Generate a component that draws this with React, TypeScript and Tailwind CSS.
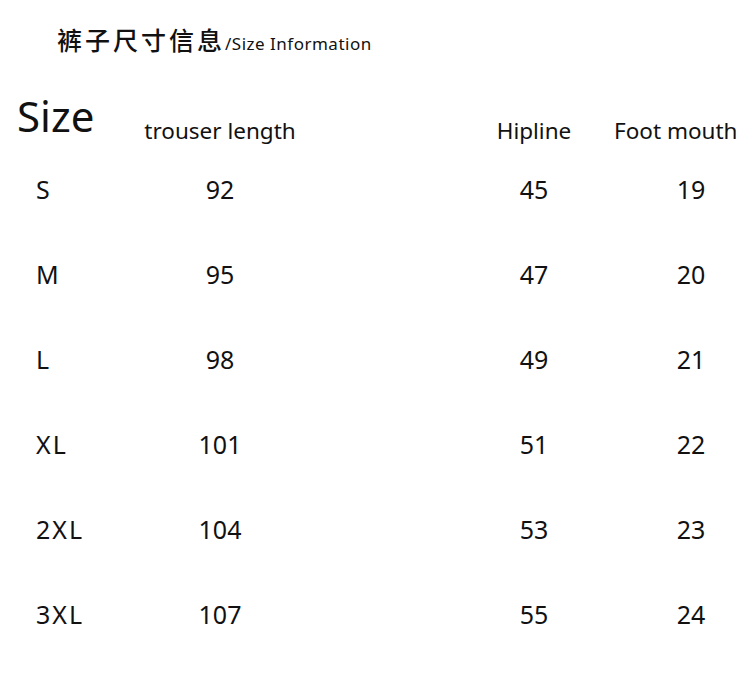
import React from "react";

const rows = [
  ["S", "92", "45", "19"],
  ["M", "95", "47", "20"],
  ["L", "98", "49", "21"],
  ["XL", "101", "51", "22"],
  ["2XL", "104", "53", "23"],
  ["3XL", "107", "55", "24"],
];

export default function App() {
  return (
    <div
      className="w-[750px] h-[683px] bg-white text-[#111] overflow-hidden"
      style={{ fontFamily: '"Noto Sans", "Noto Sans CJK SC", sans-serif' }}
    >
      <div className="h-[70px] pt-[27px] pl-[57px] flex items-baseline">
        <span
          className="text-[25px] leading-none tracking-[3px] font-medium"
          style={{ fontFamily: '"Noto Sans CJK SC", sans-serif' }}
        >
          裤子尺寸信息
        </span>
        <span className="text-[17px] leading-none tracking-[0.5px]">/Size Information</span>
      </div>
      <div className="h-[77px] flex">
        <div className="w-[120px] pl-[17px] pt-[25px]">
          <span className="text-[42px] leading-none block">Size</span>
        </div>
        <div className="w-[200px] pt-[50px] text-center">
          <span className="text-[22.5px] leading-none block">trouser length</span>
        </div>
        <div className="w-[134px]" />
        <div className="w-[160px] pt-[50px] text-center">
          <span className="text-[22.5px] leading-none block">Hipline</span>
        </div>
        <div className="pt-[50px]">
          <span className="text-[22.5px] leading-none block">Foot mouth</span>
        </div>
      </div>
      {rows.map((r) => (
        <div key={r[0]} className="h-[85px] flex items-center text-[25px] leading-none">
          <div className="w-[120px] pl-[36px] tracking-[2px]">{r[0]}</div>
          <div className="w-[200px] text-center">{r[1]}</div>
          <div className="w-[134px]" />
          <div className="w-[160px] text-center">{r[2]}</div>
          <div className="w-[18px]" />
          <div className="w-[118px] text-center">{r[3]}</div>
        </div>
      ))}
    </div>
  );
}
